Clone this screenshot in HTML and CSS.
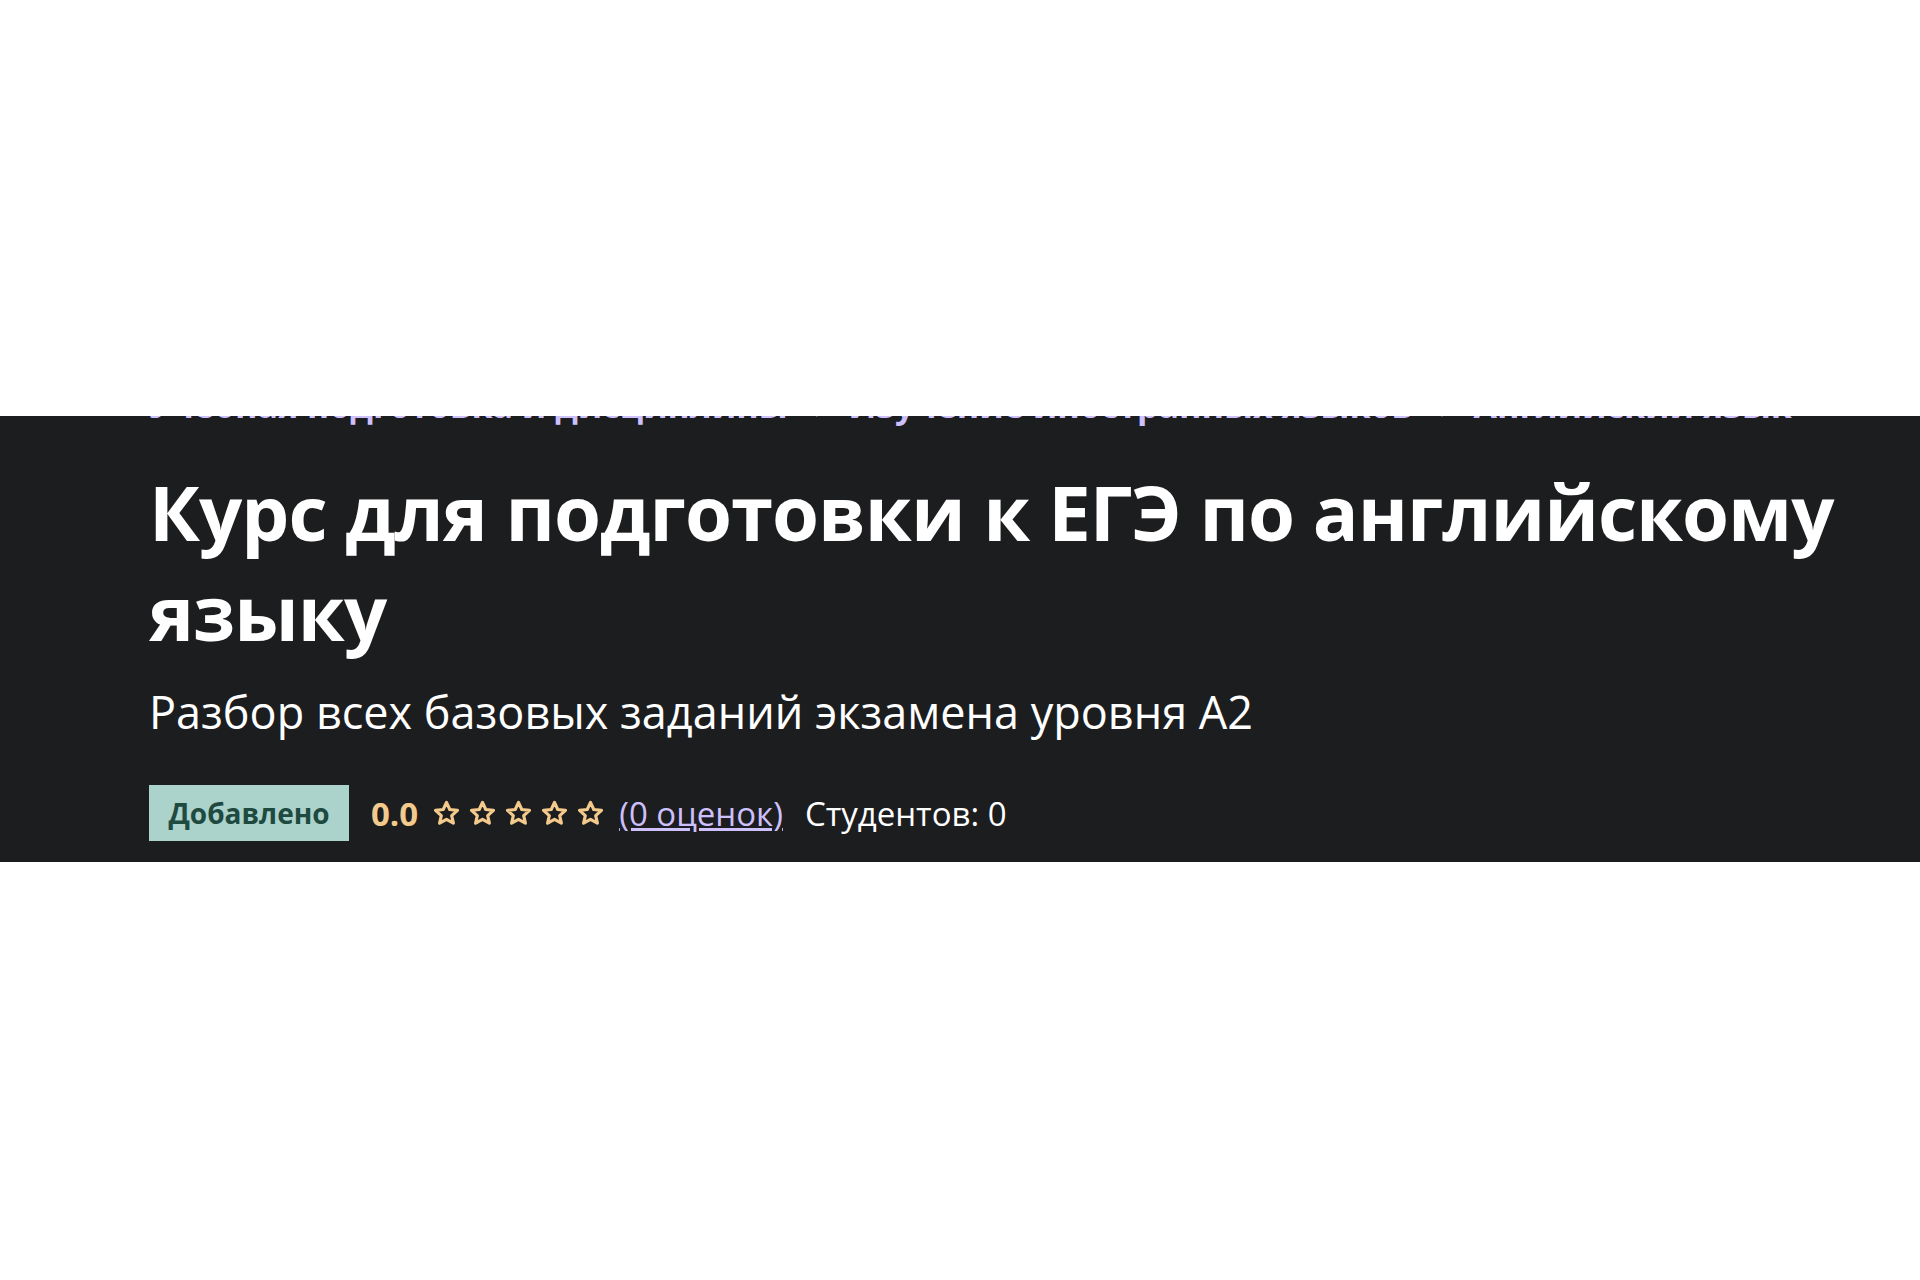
FILE: index.html
```html
<!DOCTYPE html>
<html lang="ru">
<head>
  <meta charset="UTF-8" />
  <meta name="viewport" content="width=device-width, initial-scale=1.0" />
  <title>Курс для подготовки к ЕГЭ по английскому языку</title>
  <link rel="stylesheet" href="styles.css">
</head>
<body>
  <div class="page-space"></div>

  <section class="course-header">
    <div class="course-header__inner">
      <nav class="breadcrumbs">
        <a href="#">Учебная подготовка и дисциплины</a>
        <span class="breadcrumbs__sep">›</span>
        <a href="#">Изучение иностранных языков</a>
        <span class="breadcrumbs__sep">›</span>
        <a href="#">Английский язык</a>
      </nav>

      <h1 class="course-title">Курс для подготовки к ЕГЭ по английскому языку</h1>
      <div class="course-subtitle">Разбор всех базовых заданий экзамена уровня A2</div>

      <div class="course-meta">
        <span class="badge">Добавлено</span>
        <span class="rating">
          <span class="rating__value">0.0</span>
          <span class="rating__stars">
            <svg viewBox="0 0 24 24"><path d="M12 2.8l2.7 5.9 6.4.7-4.8 4.3 1.4 6.3L12 16.8 6.3 20l1.4-6.3-4.8-4.3 6.4-.7z"/></svg>
            <svg viewBox="0 0 24 24"><path d="M12 2.8l2.7 5.9 6.4.7-4.8 4.3 1.4 6.3L12 16.8 6.3 20l1.4-6.3-4.8-4.3 6.4-.7z"/></svg>
            <svg viewBox="0 0 24 24"><path d="M12 2.8l2.7 5.9 6.4.7-4.8 4.3 1.4 6.3L12 16.8 6.3 20l1.4-6.3-4.8-4.3 6.4-.7z"/></svg>
            <svg viewBox="0 0 24 24"><path d="M12 2.8l2.7 5.9 6.4.7-4.8 4.3 1.4 6.3L12 16.8 6.3 20l1.4-6.3-4.8-4.3 6.4-.7z"/></svg>
            <svg viewBox="0 0 24 24"><path d="M12 2.8l2.7 5.9 6.4.7-4.8 4.3 1.4 6.3L12 16.8 6.3 20l1.4-6.3-4.8-4.3 6.4-.7z"/></svg>
          </span>
          <a href="#" class="rating__count">(0 оценок)</a>
        </span>
        <span class="students">Студентов: 0</span>
      </div>
    </div>
  </section>
</body>
</html>
```

FILE: styles.css
```css
/* Reset */
*, *::before, *::after {
  margin: 0;
  padding: 0;
  box-sizing: border-box;
}

html, body {
  width: 100%;
  background: #ffffff;
  font-family: 'Open Sans', 'Noto Sans', sans-serif;
}

.page-space {
  height: 416px;
}

/* Dark course header */
.course-header {
  background: #1c1d1f;
  color: #ffffff;
  height: 446px;
  overflow: hidden;
}

.course-header__inner {
  padding-left: 149px;
  padding-right: 40px;
}

/* only the lower edge of the crumbs peeks out under the band's top */
.breadcrumbs {
  display: flex;
  align-items: center;
  gap: 24px;
  margin-top: -33px;
  height: 44px;
  line-height: 44px;
  font-size: 34px;
  font-weight: 700;
  white-space: nowrap;
}

.breadcrumbs a {
  flex-shrink: 0;
  color: #cec0fc;
  text-decoration: none;
}

.breadcrumbs__sep {
  color: #ffffff;
}

.course-title {
  margin-top: 35px;
  max-width: 1720px;
  font-size: 76px;
  line-height: 100px;
  font-weight: 700;
  letter-spacing: -1px;
}

.course-subtitle {
  margin-top: 20px;
  font-size: 45px;
  line-height: 60px;
}

.course-meta {
  display: flex;
  align-items: center;
  gap: 22px;
  margin-top: 43px;
  font-size: 33px;
}

.badge {
  display: inline-flex;
  align-items: center;
  justify-content: center;
  width: 200px;
  height: 56px;
  background: #acd2cc;
  color: #1e4a40;
  font-size: 28px;
  font-weight: 700;
}

.rating {
  display: flex;
  align-items: center;
  gap: 14px;
}

.rating__value {
  color: #f3ca8c;
  font-weight: 700;
}

.rating__stars {
  display: flex;
  gap: 7px;
}

.rating__stars svg {
  width: 29px;
  height: 29px;
  fill: none;
  stroke: #f3ca8c;
  stroke-width: 2.6;
  stroke-linejoin: round;
}

.rating__count {
  color: #cec0fc;
  text-decoration: underline;
}

.students {
  color: #ffffff;
}
```
